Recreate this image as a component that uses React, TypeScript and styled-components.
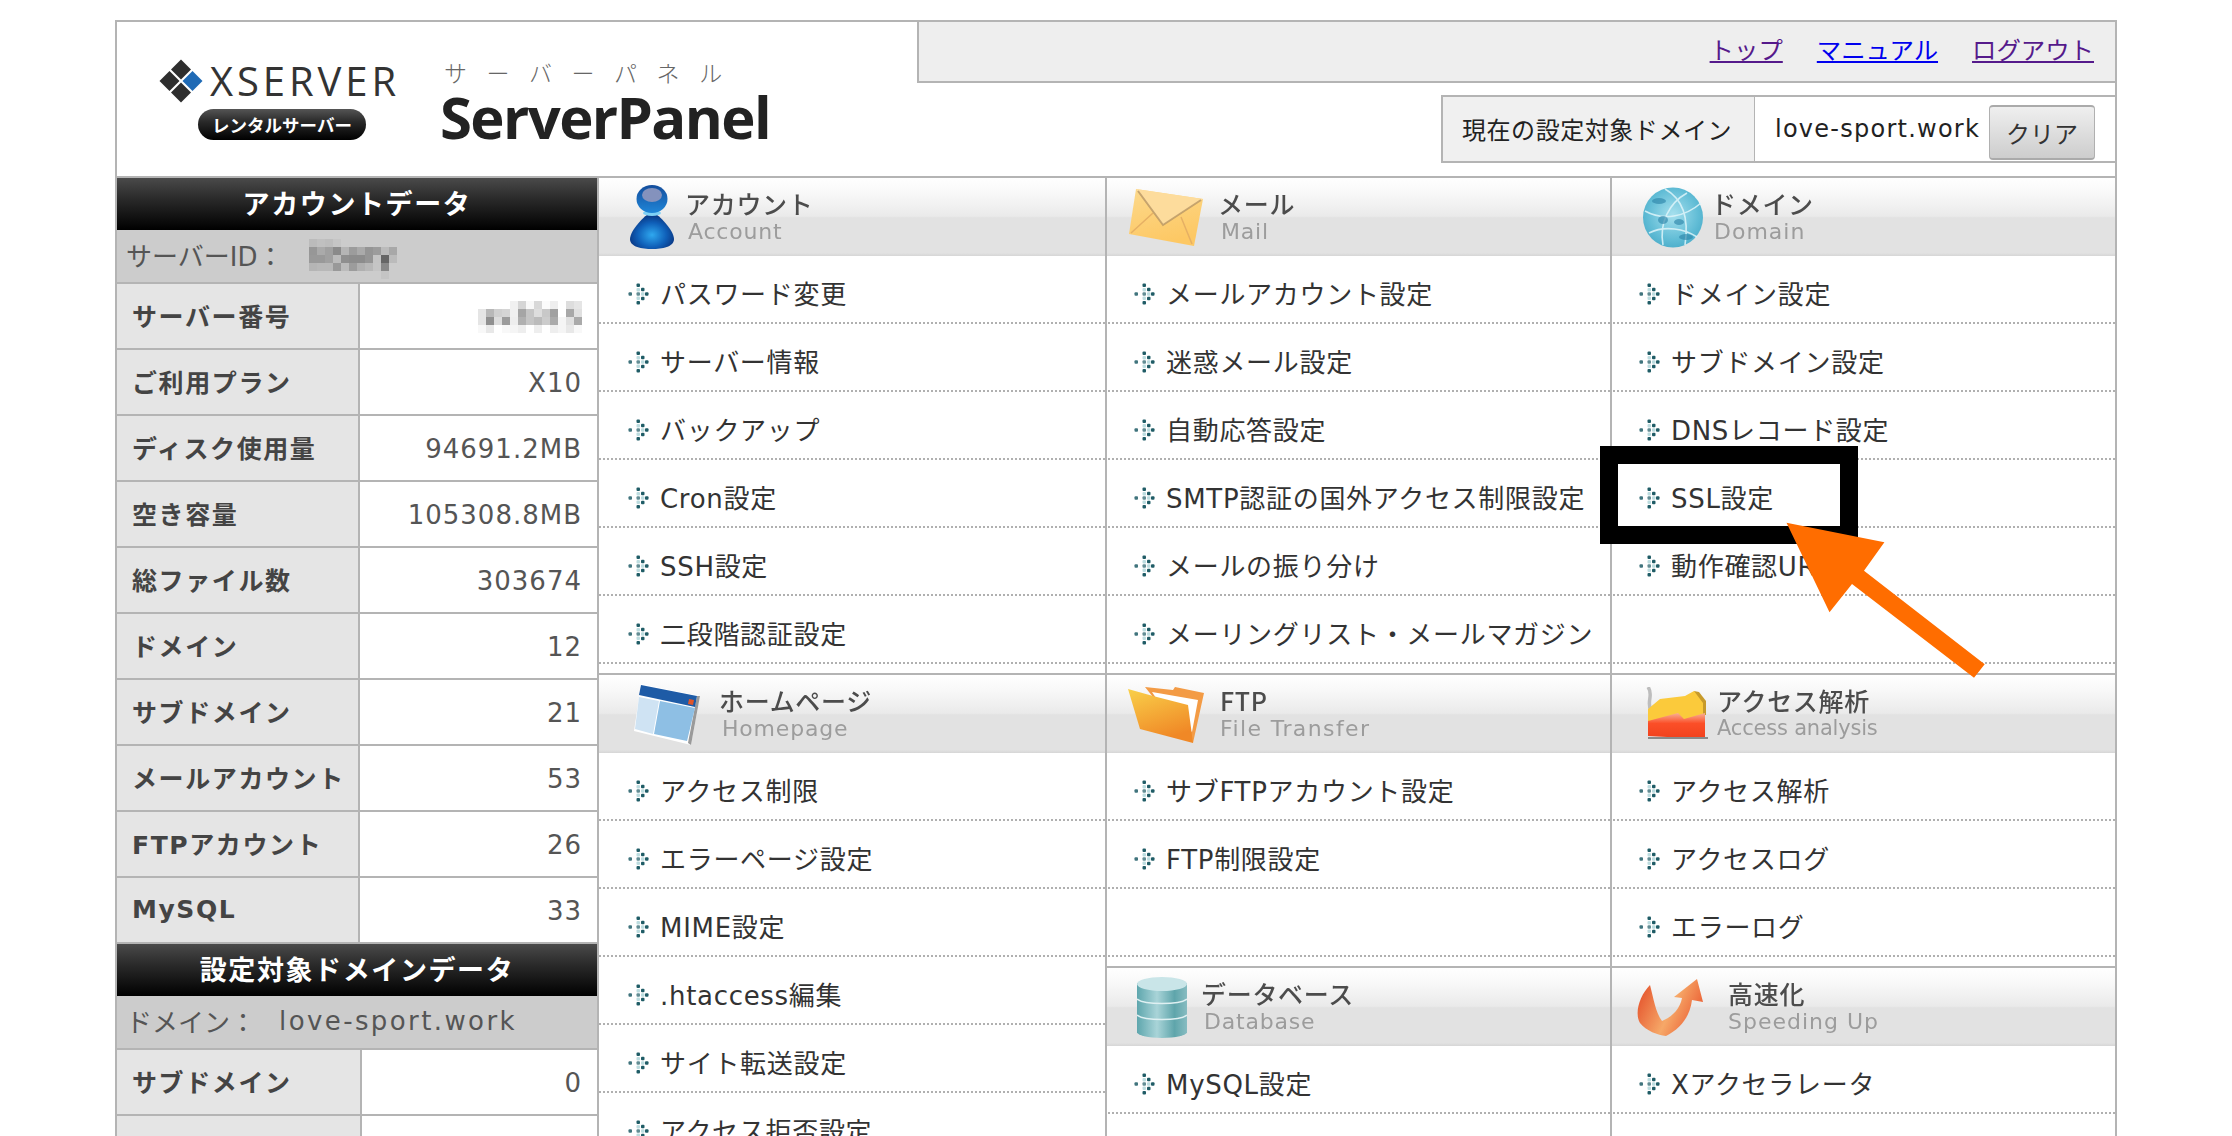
import React from "react";
import styled, { createGlobalStyle } from "styled-components";

const FONT = `"DejaVu Sans", "Noto Sans CJK JP", sans-serif`;

const Global = createGlobalStyle`
  html, body { margin: 0; padding: 0; background: #fff; }
  body { font-family: ${FONT}; }
`;

const Page = styled.div`
  position: relative;
  width: 2232px;
  height: 1136px;
  overflow: hidden;
  padding: 20px 115px 0;
  box-sizing: border-box;
`;

const Frame = styled.div`
  width: 2002px;
  height: 1200px;
  box-sizing: border-box;
  border: 2px solid #b4b4b4;
  border-bottom: none;
  display: flex;
  flex-direction: column;
`;

const Header = styled.header`
  height: 154px;
  flex: none;
  display: flex;
  justify-content: space-between;
  border-bottom: 2px solid #b4b4b4;
`;

const Brand = styled.div`
  display: flex;
  align-items: flex-start;
  padding: 30px 0 0 39px;
`;

const Company = styled.div`
  width: 252px;
  display: flex;
  flex-direction: column;
`;

const CompanyTop = styled.div`
  display: flex;
  align-items: center;
  gap: 4px;
  height: 58px;
`;

const CompanyName = styled.span`
  font-family: "Open Sans", sans-serif;
  font-size: 40px;
  font-weight: 400;
  letter-spacing: 3.9px;
  color: #333;
  line-height: 1;
`;

const Pill = styled.span`
  align-self: flex-start;
  margin: -1px 0 0 42px;
  width: 168px;
  height: 31px;
  border-radius: 16px;
  background: linear-gradient(#555 0, #2a2a2a 40%, #000 100%);
  color: #fff;
  font-family: "Noto Sans CJK JP", sans-serif;
  font-weight: 700;
  font-size: 17.5px;
  line-height: 31px;
  text-align: center;
`;

const Product = styled.div`
  margin-left: 32px;
  display: flex;
  flex-direction: column;
`;

const ProductKana = styled.span`
  font-family: "Noto Sans CJK JP", sans-serif;
  font-weight: 300;
  font-size: 23px;
  line-height: 26px;
  letter-spacing: 19.6px;
  color: #666;
  margin: 7px 0 0 4px;
`;

const ProductName = styled.span`
  font-family: "Open Sans", sans-serif;
  font-weight: 700;
  font-size: 58px;
  line-height: 56px;
  margin-top: 4px;
  letter-spacing: -1.6px;
  color: #222;
`;

const HeaderRight = styled.div`
  width: 1198px;
  display: flex;
  flex-direction: column;
  align-items: flex-end;
`;

const TopBar = styled.nav`
  align-self: stretch;
  height: 59px;
  flex: none;
  box-sizing: content-box;
  background: #eee;
  border-left: 2px solid #b4b4b4;
  border-bottom: 2px solid #b4b4b4;
  display: flex;
  justify-content: flex-end;
  align-items: center;
  gap: 34px;
  padding-right: 21px;
`;

const TopLink = styled.a<{ $visited?: boolean }>`
  font-family: "Noto Sans CJK JP", sans-serif;
  font-size: 24.4px;
  line-height: 32px;
  color: ${(p) => (p.$visited ? "#551a8b" : "#0000ee")};
  text-decoration: underline;
  margin-top: -6px;
`;

const DomainBox = styled.div`
  margin-top: 12px;
  width: 674px;
  height: 68px;
  box-sizing: border-box;
  border: 2px solid #b4b4b4;
  border-right: none;
  display: flex;
`;

const DomainLabel = styled.div`
  width: 312px;
  flex: none;
  box-sizing: border-box;
  background: #f0f0f0;
  border-right: 1px solid #b4b4b4;
  padding: 0 0 2px 19px;
  display: flex;
  align-items: center;
  font-size: 24px;
  letter-spacing: 0.55px;
  color: #222;
`;

const DomainValue = styled.div`
  flex: 1;
  display: flex;
  align-items: center;
  justify-content: space-between;
  padding: 0 20px;
  font-size: 24px;
  letter-spacing: 1.25px;
  color: #222;
`;

const ClearButton = styled.button`
  width: 106px;
  height: 55px;
  margin-top: 6px;
  padding: 0;
  border: 1px solid #b0b0b0;
  border-top: 2px solid #aaa;
  border-bottom: 2px solid #aaa;
  border-radius: 4px;
  background: linear-gradient(#efefef, #cdcdcd);
  font-family: ${FONT};
  font-size: 24px;
  color: #333;
`;

const Main = styled.div`
  flex: 1;
  display: flex;
  min-height: 0;
`;

const Sidebar = styled.aside`
  width: 482px;
  flex: none;
  box-sizing: border-box;
  border-right: 2px solid #b4b4b4;
  display: flex;
  flex-direction: column;
`;

const DataTitle = styled.h2<{ $ruled?: boolean }>`
  margin: 0;
  height: 52px;
  flex: none;
  box-sizing: content-box;
  border-top: ${(p) => (p.$ruled ? "2px solid #b4b4b4" : "none")};
  background: linear-gradient(#4a4a4a 0, #2a2a2a 40%, #000 100%);
  color: #fff;
  font-family: "Noto Sans CJK JP", sans-serif;
  font-weight: 700;
  font-size: 27px;
  letter-spacing: 1.6px;
  line-height: 50px;
  text-align: center;
`;

const DataSub = styled.div`
  height: 52px;
  flex: none;
  box-sizing: border-box;
  background: #ccc;
  display: flex;
  align-items: center;
  padding: 0 0 4px 9px;
  font-size: 26px;
  color: #555;
`;

const SubValue = styled.span`
  font-size: 26px;
  letter-spacing: 2.4px;
  margin-left: 23px;
  padding-top: 2px;
`;

const DataRow = styled.div<{ $label: number }>`
  height: 66px;
  flex: none;
  box-sizing: border-box;
  border-top: 2px solid #b4b4b4;
  display: grid;
  grid-template-columns: ${(p) => p.$label}px 1fr;
`;

const DataLabel = styled.div`
  background: #e5e5e5;
  border-right: 2px solid #b4b4b4;
  padding: 0 0 2px 15px;
  display: flex;
  align-items: center;
  font-weight: 700;
  font-size: 25px;
  letter-spacing: 1.6px;
  color: #444;
`;

const DataValue = styled.div`
  display: flex;
  align-items: center;
  justify-content: flex-end;
  padding: 1px 15px 0 0;
  font-size: 26px;
  letter-spacing: 1px;
  color: #555;
`;

const MenuGrid = styled.div`
  flex: 1;
  display: grid;
  grid-template-columns: 506px 505px 505px;
`;

const MenuColumn = styled.div<{ $first?: boolean }>`
  position: relative;
  display: flex;
  flex-direction: column;

  &::before {
    content: "";
    display: ${(p) => (p.$first ? "none" : "block")};
    position: absolute;
    top: 0;
    bottom: 0;
    left: 0;
    width: 2px;
    background: #b4b4b4;
  }
`;

const Section = styled.section<{ $gapBelow: number; $ruled?: boolean }>`
  padding-bottom: ${(p) => p.$gapBelow}px;
  border-top: ${(p) => (p.$ruled ? "2px solid #b4b4b4" : "none")};
`;

const SectionHead = styled.div<{ $iconLeft: number }>`
  height: 78px;
  display: flex;
  align-items: center;
  padding-left: ${(p) => p.$iconLeft}px;
  background: linear-gradient(#fff 0, #f8f8f8 20%, #eaeaea 49%, #e2e2e2 51%, #e2e2e2 96%, #d6d6d6 100%);
`;

const IconSlot = styled.div<{ $width: number }>`
  width: ${(p) => p.$width}px;
  flex: none;
  display: flex;
  align-items: center;
  filter: blur(0.5px);
`;

const TitleBlock = styled.div`
  display: flex;
  flex-direction: column;
  filter: blur(0.6px);
`;

const SectionTitle = styled.span`
  font-family: "Noto Sans CJK JP", ${FONT};
  font-weight: 500;
  font-size: 25px;
  line-height: 27px;
  letter-spacing: 0.7px;
  color: #4c4c4c;
`;

const SectionSub = styled.span<{ $spacing: number; $size: number; $indent: number }>`
  font-size: ${(p) => p.$size}px;
  line-height: 27px;
  letter-spacing: ${(p) => p.$spacing}px;
  margin: 1px 0 0 ${(p) => p.$indent}px;
  color: #9c9c9c;
`;

const MenuRow = styled.div`
  height: 68px;
  box-sizing: border-box;
  border-bottom: 2px dotted #b0b0b0;
  display: flex;
  align-items: center;
  gap: 11px;
  padding: 7px 0 0 29px;
  font-size: 26px;
  letter-spacing: 0.7px;
  color: #333;
  white-space: nowrap;
`;

const Callout = styled.div`
  position: absolute;
  left: 1600px;
  top: 446px;
  width: 258px;
  height: 98px;
  box-sizing: border-box;
  border: 18px solid #000;
`;

const ArrowOverlay = styled.svg`
  position: absolute;
  left: 1780px;
  top: 515px;
`;

const MosaicSvg = styled.svg<{ $shift?: number }>`
  display: block;
  flex: none;
  margin: ${(p) => (p.$shift ? `10px 0 0 ${p.$shift}px` : "0")};
`;

const BulletSvg = styled.svg`
  flex: none;
  margin-top: 2px;
`;

const InlineMark = styled.svg`
  flex: none;
`;

/* ---- drawings ---- */

type Cell = string | null;

const Mosaic = ({ cells, shift }: { cells: Cell[][]; shift?: number }) => (
  <MosaicSvg
    $shift={shift}
    width={cells[0].length * 8}
    height={cells.length * 8}
    shapeRendering="crispEdges"
  >
    {cells.map((row, y) =>
      row.map((c, x) => (c ? <rect key={`${x}-${y}`} x={x * 8} y={y * 8} width={8} height={8} fill={c} /> : null))
    )}
  </MosaicSvg>
);

const _ = null;
const ID_CELLS: Cell[][] = [
  ["#bbb", "#c0c0c0", "#bdbdbd", "#c5c5c5", _, _, _, _, _, _, _],
  ["#979797", "#aaa", "#a0a0a0", "#8a8a8a", "#b5b5b5", "#9c9c9c", "#aaa", "#959595", "#9c9c9c", "#bbb", "#a8a8a8"],
  ["#999", "#999", "#a0a0a0", "#bbb", "#8f8f8f", "#8c8c8c", "#8c8c8c", "#959595", "#c4c4c4", "#666", "#bbb"],
  ["#b5b5b5", "#b8b8b8", "#b8b8b8", "#999", "#bbb", "#9c9c9c", "#b0b0b0", "#b8b8b8", "#c5c5c5", "#888", _],
  [_, _, _, _, _, _, _, _, _, "#c4c4c4", _],
];
const NO_CELLS: Cell[][] = [
  [_, _, _, _, "#f0f0f0", "#d5d5d5", "#f8f8f8", "#d8d8d8", "#fbfbfb", "#eee", _, "#ddd", "#e5e5e5"],
  ["#e5e5e5", "#b8b8b8", "#d0d0d0", "#d5d5d5", "#f0f0f0", "#a5a5a5", "#c5c5c5", "#ddd", "#c8c8c8", "#a0a0a0", _, "#a8a8a8", "#e0e0e0"],
  ["#e5e5e5", "#909090", "#ddd", "#9c9c9c", "#eee", "#b0b0b0", "#c5c5c5", "#bbb", "#ccc", "#aaa", "#f5f5f5", "#e0e0e0", "#aaa"],
  ["#f8f8f8", "#e8e8e8", _, "#f8f8f8", "#f5f5f5", "#eee", _, "#eee", _, "#eee", "#f5f5f5", "#e8e8e8", "#f8f8f8"],
];

const Bullet = () => (
  <BulletSvg width="21" height="22" viewBox="0 0 21 22">
    <g fill="#bcdcdf">
      <rect x="8.5" y="5" width="3.5" height="3.5" rx="1" />
      <rect x="8.5" y="13.5" width="3.5" height="3.5" rx="1" />
      <rect x="13" y="9.25" width="3.5" height="3.5" rx="1" />
    </g>
    <g fill="#1f5c66">
      <rect x="0.5" y="9.25" width="3.5" height="3.5" rx="1" opacity="0.85" />
      <rect x="8.5" y="0.5" width="3.5" height="3.5" rx="1" />
      <rect x="8.5" y="18" width="3.5" height="3.5" rx="1" />
      <rect x="13" y="4.75" width="3.5" height="3.5" rx="1" />
      <rect x="13" y="13.75" width="3.5" height="3.5" rx="1" />
      <rect x="17" y="9.25" width="3.5" height="3.5" rx="1" />
      <rect x="8.5" y="9.25" width="3.5" height="3.5" rx="1" opacity="0.7" />
    </g>
  </BulletSvg>
);

const XMark = () => (
  <InlineMark width="50" height="50" viewBox="0 0 50 50">
    <g fill="#2e2e2e">
      <polygon points="25,3.5 35,13.5 25,23.5 15,13.5" />
      <polygon points="13.5,15 23.5,25 13.5,35 3.5,25" />
      <polygon points="25,26.5 35,36.5 25,46.5 15,36.5" />
    </g>
    <polygon points="36.5,15 46.5,25 36.5,35 26.5,25" fill="#1f6ab5" />
  </InlineMark>
);

const PersonIcon = () => (
  <svg width="44" height="64" viewBox="0 0 44 64">
    <defs>
      <radialGradient id="pb" cx="50%" cy="62%" r="55%">
        <stop offset="0" stopColor="#2fa8ef" />
        <stop offset="0.6" stopColor="#0f5fb8" />
        <stop offset="1" stopColor="#0a3580" />
      </radialGradient>
      <linearGradient id="ph" x1="0" y1="0" x2="0" y2="1">
        <stop offset="0" stopColor="#144d9c" />
        <stop offset="1" stopColor="#1f86d8" />
      </linearGradient>
    </defs>
    <path d="M22 27C30 30 44 46 44 54C44 62 32 64 22 64C12 64 0 62 0 54C0 46 14 30 22 27Z" fill="url(#pb)" />
    <ellipse cx="22" cy="28" rx="9" ry="3" fill="#7fd0f5" />
    <ellipse cx="22" cy="14" rx="15.5" ry="14" fill="url(#ph)" />
    <ellipse cx="22" cy="10" rx="10" ry="7" fill="#8492bd" />
  </svg>
);

const MailIcon = () => (
  <svg width="74" height="57" viewBox="0 0 74 57">
    <defs>
      <linearGradient id="mg" x1="0" y1="0" x2="0.3" y2="1">
        <stop offset="0" stopColor="#fcd98c" />
        <stop offset="1" stopColor="#fdc864" />
      </linearGradient>
    </defs>
    <polygon points="7,0 74,10 65,57 0,45" fill="url(#mg)" />
    <path d="M2 44L24 24M63 55L52 28" stroke="#e6b064" strokeWidth="1.5" fill="none" />
    <polygon points="7,0 74,10 34,36" fill="#fddc9c" />
    <path d="M9 2L34 36L72 11" stroke="#b39262" strokeWidth="2" fill="none" opacity="0.75" />
  </svg>
);

const GlobeIcon = () => (
  <svg width="60" height="61" viewBox="0 0 60 61">
    <defs>
      <radialGradient id="gg" cx="50%" cy="45%" r="55%">
        <stop offset="0" stopColor="#a6e0ee" />
        <stop offset="0.75" stopColor="#62bdd6" />
        <stop offset="1" stopColor="#4fb0cc" />
      </radialGradient>
    </defs>
    <circle cx="30" cy="30.5" r="30" fill="url(#gg)" />
    <g fill="none" stroke="#dff5fa" strokeWidth="1.6" opacity="0.85">
      <path d="M22 2C40 12 46 32 42 58" />
      <path d="M2 24C20 34 42 30 58 16" />
      <path d="M6 46C22 38 42 42 54 50" />
      <path d="M44 6C26 16 16 36 20 58" />
    </g>
    <g fill="#2f87ab" opacity="0.65">
      <ellipse cx="20" cy="33" rx="5" ry="4" />
      <ellipse cx="43" cy="50" rx="7" ry="3" />
      <ellipse cx="16" cy="14" rx="7" ry="3" />
      <ellipse cx="36" cy="35" rx="5" ry="3" />
    </g>
  </svg>
);

const PageIcon = () => (
  <svg width="67" height="62" viewBox="0 0 67 62">
    <polygon points="8,1 67,13 58,62 1,48" fill="#fff" />
    <polygon points="64,13 67,13 58,62 55,60" fill="#9a9a9a" />
    <polygon points="8,2 64,13 62,24 6,12" fill="#1e5ba6" />
    <polygon points="56,16 61,17 60,22 55,21" fill="#e0562a" />
    <polygon points="6,14 26,18 20,51 2,46" fill="#cfe3f3" />
    <polygon points="27,18 62,25 54,58 21,51" fill="#8ebfe4" />
  </svg>
);

const FolderIcon = () => (
  <svg width="76" height="57" viewBox="0 0 76 57">
    <defs>
      <linearGradient id="fg" x1="0" y1="0" x2="0.4" y2="1">
        <stop offset="0" stopColor="#f9d04a" />
        <stop offset="1" stopColor="#f08826" />
      </linearGradient>
    </defs>
    <polygon points="17,1 45,4 47,1 76,7 65,57 40,30" fill="#f39b45" />
    <polygon points="24,6 70,14 64,46 40,30" fill="#fff" />
    <polygon points="0,3 25,10 60,19 65,57 12,43" fill="url(#fg)" />
  </svg>
);

const ChartIcon = () => (
  <svg width="62" height="54" viewBox="0 0 62 54">
    <defs>
      <linearGradient id="cr" x1="0" y1="0" x2="0" y2="1">
        <stop offset="0" stopColor="#f9b095" />
        <stop offset="0.4" stopColor="#fb4f28" />
        <stop offset="1" stopColor="#f0401c" />
      </linearGradient>
    </defs>
    <path d="M2 0C8 8 0 14 5 24" stroke="#bdbdbd" strokeWidth="3.5" fill="none" />
    <polygon points="48,4 53,5 60,14 60,28 52,28" fill="#c79a2a" />
    <polygon points="2,22 14,12 39,9 48,4 57,16 57,36 2,38" fill="#fbca3b" />
    <polygon points="2,34 32,26 38,32 59,26 59,52 2,49" fill="url(#cr)" />
    <rect x="2" y="50" width="60" height="2" fill="#8a8a8a" />
  </svg>
);

const DbIcon = () => (
  <svg width="50" height="61" viewBox="0 0 50 61">
    <defs>
      <linearGradient id="dg" x1="0" y1="0" x2="1" y2="0">
        <stop offset="0" stopColor="#5ea6ad" />
        <stop offset="0.4" stopColor="#a9d4d8" />
        <stop offset="0.75" stopColor="#5fa5ab" />
        <stop offset="1" stopColor="#87bcc1" />
      </linearGradient>
    </defs>
    <rect x="0" y="6" width="50" height="50" fill="url(#dg)" />
    <ellipse cx="25" cy="55" rx="25" ry="6" fill="url(#dg)" />
    <path d="M0 22C8 28 42 28 50 22M0 38C8 44 42 44 50 38" stroke="#dff0f2" strokeWidth="1.5" fill="none" />
    <ellipse cx="25" cy="7" rx="25" ry="7" fill="#c9e5e8" />
  </svg>
);

const SpeedIcon = () => (
  <svg width="68" height="57" viewBox="0 0 68 57">
    <defs>
      <linearGradient id="sg" x1="0" y1="0.2" x2="1" y2="0.6">
        <stop offset="0" stopColor="#e4502a" />
        <stop offset="0.55" stopColor="#f6a868" />
        <stop offset="1" stopColor="#ea5a30" />
      </linearGradient>
    </defs>
    <path d="M14 6C4 16 -2 34 4 44C10 52 22 56 30 57C44 50 54 38 56 21L67 23L61 0L38 18L46 19C44 30 36 38 26 42C20 34 18 22 14 6Z" fill="url(#sg)" />
  </svg>
);

/* ---- data ---- */

type SectionData = {
  title: string;
  sub: string;
  icon: React.ReactNode;
  iconLeft: number;
  textLeft: number;
  items: string[];
  gapBelow: number;
  subSize?: number;
  subSpacing?: number;
  subIndent?: number;
};

const columns: SectionData[][] = [
  [
    {
      title: "アカウント", sub: "Account", icon: <PersonIcon />, iconLeft: 31, textLeft: 86, gapBelow: 9,
      items: ["パスワード変更", "サーバー情報", "バックアップ", "Cron設定", "SSH設定", "二段階認証設定"],
    },
    {
      title: "ホームページ", sub: "Homepage", icon: <PageIcon />, iconLeft: 34, textLeft: 120, gapBelow: 0,
      items: ["アクセス制限", "エラーページ設定", "MIME設定", ".htaccess編集", "サイト転送設定", "アクセス拒否設定"],
    },
  ],
  [
    {
      title: "メール", sub: "Mail", icon: <MailIcon />, iconLeft: 24, textLeft: 113, gapBelow: 9,
      items: ["メールアカウント設定", "迷惑メール設定", "自動応答設定", "SMTP認証の国外アクセス制限設定", "メールの振り分け", "メーリングリスト・メールマガジン"],
    },
    {
      title: "FTP", sub: "File Transfer", icon: <FolderIcon />, iconLeft: 23, textLeft: 115, gapBelow: 9,
      subIndent: 0, subSpacing: 1.4,
      items: ["サブFTPアカウント設定", "FTP制限設定", ""],
    },
    {
      title: "データベース", sub: "Database", icon: <DbIcon />, iconLeft: 32, textLeft: 96, gapBelow: 0,
      items: ["MySQL設定"],
    },
  ],
  [
    {
      title: "ドメイン", sub: "Domain", icon: <GlobeIcon />, iconLeft: 33, textLeft: 101, gapBelow: 9,
      subSpacing: 1,
      items: ["ドメイン設定", "サブドメイン設定", "DNSレコード設定", "SSL設定", "動作確認URL", ""],
    },
    {
      title: "アクセス解析", sub: "Access analysis", icon: <ChartIcon />, iconLeft: 36, textLeft: 107, gapBelow: 9,
      subSize: 21, subSpacing: -0.2, subIndent: 0,
      items: ["アクセス解析", "アクセスログ", "エラーログ"],
    },
    {
      title: "高速化", sub: "Speeding Up", icon: <SpeedIcon />, iconLeft: 26, textLeft: 118, gapBelow: 0,
      subIndent: 0, subSpacing: 1,
      items: ["Xアクセラレータ"],
    },
  ],
];

const accountRows: [string, React.ReactNode][] = [
  ["サーバー番号", <Mosaic cells={NO_CELLS} />],
  ["ご利用プラン", "X10"],
  ["ディスク使用量", "94691.2MB"],
  ["空き容量", "105308.8MB"],
  ["総ファイル数", "303674"],
  ["ドメイン", "12"],
  ["サブドメイン", "21"],
  ["メールアカウント", "53"],
  ["FTPアカウント", "26"],
  ["MySQL", "33"],
];

const MenuSection = ({ data, ruled }: { data: SectionData; ruled: boolean }) => (
  <Section $gapBelow={data.gapBelow} $ruled={ruled}>
    <SectionHead $iconLeft={data.iconLeft}>
      <IconSlot $width={data.textLeft - data.iconLeft}>{data.icon}</IconSlot>
      <TitleBlock>
        <SectionTitle>{data.title}</SectionTitle>
        <SectionSub
          $size={data.subSize ?? 22}
          $spacing={data.subSpacing ?? 0.8}
          $indent={data.subIndent ?? 3}
        >
          {data.sub}
        </SectionSub>
      </TitleBlock>
    </SectionHead>
    {data.items.map((item, i) => (
      <MenuRow key={i}>
        {item && <Bullet />}
        {item}
      </MenuRow>
    ))}
  </Section>
);

export default function App() {
  return (
    <Page>
      <Global />
      <Frame>
        <Header>
          <Brand>
            <Company>
              <CompanyTop>
                <XMark />
                <CompanyName>XSERVER</CompanyName>
              </CompanyTop>
              <Pill>レンタルサーバー</Pill>
            </Company>
            <Product>
              <ProductKana>サーバーパネル</ProductKana>
              <ProductName>ServerPanel</ProductName>
            </Product>
          </Brand>
          <HeaderRight>
            <TopBar>
              <TopLink $visited>トップ</TopLink>
              <TopLink>マニュアル</TopLink>
              <TopLink $visited>ログアウト</TopLink>
            </TopBar>
            <DomainBox>
              <DomainLabel>現在の設定対象ドメイン</DomainLabel>
              <DomainValue>
                love-sport.work
                <ClearButton type="button">クリア</ClearButton>
              </DomainValue>
            </DomainBox>
          </HeaderRight>
        </Header>
        <Main>
          <Sidebar>
            <DataTitle>アカウントデータ</DataTitle>
            <DataSub>
              サーバーID：
              <Mosaic cells={ID_CELLS} shift={26} />
            </DataSub>
            {accountRows.map(([label, value]) => (
              <DataRow $label={243} key={label}>
                <DataLabel>{label}</DataLabel>
                <DataValue>{value}</DataValue>
              </DataRow>
            ))}
            <DataTitle $ruled>設定対象ドメインデータ</DataTitle>
            <DataSub>
              ドメイン：
              <SubValue>love-sport.work</SubValue>
            </DataSub>
            <DataRow $label={245}>
              <DataLabel>サブドメイン</DataLabel>
              <DataValue>0</DataValue>
            </DataRow>
            <DataRow $label={245}>
              <DataLabel />
              <DataValue />
            </DataRow>
          </Sidebar>
          <MenuGrid>
            {columns.map((sections, c) => (
              <MenuColumn key={c} $first={c === 0}>
                {sections.map((s, i) => (
                  <MenuSection key={s.title} data={s} ruled={i > 0} />
                ))}
              </MenuColumn>
            ))}
          </MenuGrid>
        </Main>
      </Frame>
      <Callout />
      <ArrowOverlay width="215" height="170" viewBox="1780 515 215 170">
        <polygon
          points="1786.5,522.7 1884.4,542.3 1864,570.7 1984.7,664.3 1974,677.7 1852,584 1829.5,612.3"
          fill="#ff6d00"
        />
      </ArrowOverlay>
    </Page>
  );
}
